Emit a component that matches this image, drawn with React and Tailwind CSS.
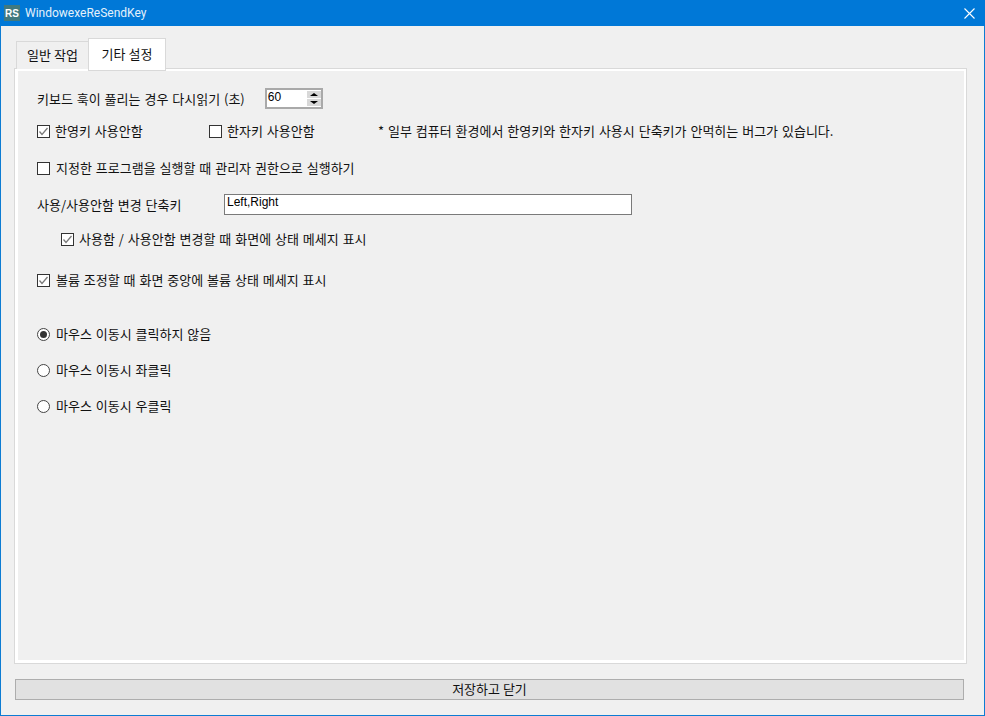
import React from "react";

const FONT = "font-['Noto_Sans_CJK_KR','Liberation_Sans',sans-serif]";

const Check = ({ checked }) => (
  <span className="flex w-[13px] h-[13px] shrink-0 items-center justify-center border border-[#333333] bg-white">
    {checked && (
      <svg width="11" height="11" viewBox="0 0 11 11" fill="none">
        <path d="M1.5 5.5 L4 8.5 L9.5 2" stroke="#7a7a7a" strokeWidth="1.3" />
      </svg>
    )}
  </span>
);

const Radio = ({ checked }) => (
  <span className="flex w-[13px] h-[13px] shrink-0 items-center justify-center rounded-full border border-[#444444] bg-white">
    {checked && <span className="w-[7px] h-[7px] rounded-full bg-[#333333]" />}
  </span>
);

const Spinner = () => (
  <div className="flex w-[58px] h-[21px] ml-[20px] border-2 border-[#a9a9a9] bg-white">
    <span className="flex-1 pl-[1px] text-[12px] leading-[15px] font-['Liberation_Sans',sans-serif]">60</span>
    <div className="flex flex-col w-[14px] h-[15px] mt-[1px] gap-[1px] bg-white">
      <span className="flex flex-1 items-center justify-center bg-[#d8d8d8]">
        <span className="border-x-[4px] border-b-[3px] border-x-transparent border-b-black" />
      </span>
      <span className="flex flex-1 items-center justify-center bg-[#d8d8d8]">
        <span className="border-x-[4px] border-t-[3px] border-x-transparent border-t-black" />
      </span>
    </div>
  </div>
);

const rowText = "text-[13px] leading-[20px] text-[#111111] [word-spacing:1px] whitespace-nowrap";

export default function App() {
  return (
    <div className={`flex flex-col w-[985px] h-[716px] border border-t-0 border-[#0d7cd3] bg-[#f0f0f0] ${FONT}`}>
      {/* Title bar */}
      <div className="flex items-center h-[26px] shrink-0 -mx-[1px] pl-[4px] pr-[10px] bg-[#0078d7]">
        <span className="flex items-center justify-center w-[16px] h-[16px] bg-[#41797f] text-white text-[10px] font-bold font-['Liberation_Sans',sans-serif]">
          RS
        </span>
        <span className="ml-[5px] text-[12px] leading-none text-[#e4f1fb] font-['Roboto',sans-serif]">WindowexeReSendKey</span>
        <svg className="ml-auto" width="11" height="11" viewBox="0 0 11 11" stroke="white" strokeWidth="1.1">
          <path d="M0.5 0.5 L10.5 10.5 M10.5 0.5 L0.5 10.5" />
        </svg>
      </div>

      {/* Tabs */}
      <div className="relative z-10 flex items-end h-[42px] shrink-0 ml-[15px]">
        <div className="flex items-center justify-center w-[73px] h-[28px] mb-[-1px] pb-[2px] border border-b-0 border-[#d9d9d9] bg-[#f0f0f0] text-[13px] text-[#111111]">
          일반 작업
        </div>
        <div className="flex items-center justify-center w-[76px] h-[31px] mb-[-2px] pb-[4px] border-2 border-b-0 border-[#ffffff] outline-1 outline-[#d9d9d9] bg-white text-[13px] text-[#111111]">
          기타 설정
        </div>
      </div>

      {/* Panel */}
      <div className="flex flex-col w-[953px] h-[596px] shrink-0 ml-[13px] border border-[#d9d9d9] bg-white p-[2px] pb-[3px]">
        <div className="flex-1 bg-[#f0f0f0] ml-[1px] pl-[19px] pt-[17px]">
          <div className="flex items-center h-[21px]">
            <span className={rowText}>키보드 훅이 풀리는 경우 다시읽기 (초)</span>
            <Spinner />
          </div>
          <div className="flex items-center h-[20px] mt-[12px]">
            <Check checked />
            <span className={`${rowText} ml-[5px] w-[154px]`}>한영키 사용안함</span>
            <Check />
            <span className={`${rowText} ml-[5px] w-[151px]`}>한자키 사용안함</span>
            <span className={rowText}>* 일부 컴퓨터 환경에서 한영키와 한자키 사용시 단축키가 안먹히는 버그가 있습니다.</span>
          </div>
          <div className="flex items-center h-[20px] mt-[17px]">
            <Check />
            <span className={`${rowText} ml-[6px]`}>지정한 프로그램을 실행할 때 관리자 권한으로 실행하기</span>
          </div>
          <div className="flex items-center h-[21px] mt-[16px]">
            <span className={`${rowText} w-[187px]`}>사용/사용안함 변경 단축키</span>
            <div className="w-[408px] h-[21px] border border-[#7a7a7a] bg-white pl-[2px] text-[12px] leading-[15px] text-black font-['Liberation_Sans',sans-serif]">
              Left,Right
            </div>
          </div>
          <div className="flex items-center h-[20px] mt-[14px] ml-[24px]">
            <Check checked />
            <span className={`${rowText} ml-[5px]`}>사용함 / 사용안함 변경할 때 화면에 상태 메세지 표시</span>
          </div>
          <div className="flex items-center h-[20px] mt-[21px]">
            <Check checked />
            <span className={`${rowText} ml-[6px]`}>볼륨 조정할 때 화면 중앙에 볼륨 상태 메세지 표시</span>
          </div>
          <div className="flex items-center h-[20px] mt-[34px]">
            <Radio checked />
            <span className={`${rowText} ml-[6px]`}>마우스 이동시 클릭하지 않음</span>
          </div>
          <div className="flex items-center h-[20px] mt-[16px]">
            <Radio />
            <span className={`${rowText} ml-[6px]`}>마우스 이동시 좌클릭</span>
          </div>
          <div className="flex items-center h-[20px] mt-[16px]">
            <Radio />
            <span className={`${rowText} ml-[6px]`}>마우스 이동시 우클릭</span>
          </div>
        </div>
      </div>

      {/* Save button */}
      <button className="flex items-center justify-center w-[949px] h-[21px] shrink-0 ml-[14px] mt-[15px] pb-[2px] border border-[#adadad] bg-[#e1e1e1] text-[13px] text-[#111111]">
        저장하고 닫기
      </button>
    </div>
  );
}
